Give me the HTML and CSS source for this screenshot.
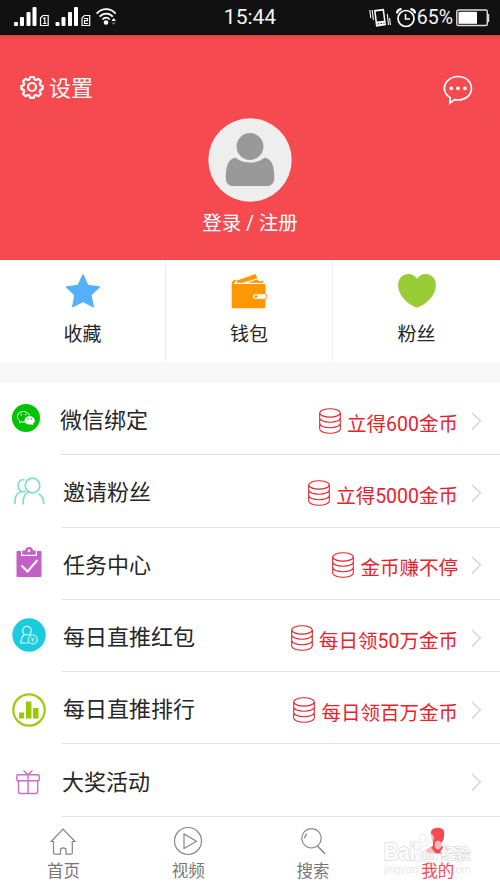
FILE: index.html
```
<!DOCTYPE html>
<html lang="zh-CN">
<head>
<meta charset="utf-8">
<title>我的</title>
<link rel="stylesheet" href="styles.css">
</head>
<body>
<svg class="defs" width="0" height="0">
  <symbol id="coins" viewBox="0 0 22 26">
    <g fill="none" stroke="currentColor" stroke-width="1.1">
      <ellipse cx="11" cy="4.9" rx="10.3" ry="4.2"/>
      <path d="M.7 4.9V21c0 2.400 4.600 4.300 10.300 4.300S21.300 23.400 21.300 21V4.900M.7 10c0 2.400 4.600 4.200 10.300 4.200s10.300-1.800 10.300-4.200M.7 15.500c0 2.400 4.600 4.200 10.300 4.200s10.300-1.800 10.300-4.200"/>
    </g>
  </symbol>
  <symbol id="chevron" viewBox="0 0 11 18">
    <path d="M1 1l8.500 8L1 17.500" fill="none" stroke="#d4d4d4" stroke-width="1.300"/>
  </symbol>
</svg>

<header class="status">
  <svg class="signals" width="106" height="20" viewBox="0 0 106 20">
    <g fill="#fff">
      <rect x="0" y="15" width="4" height="4" rx="1"/><rect x="6" y="10" width="4" height="9" rx="1"/><rect x="12.500" y="5" width="4" height="14" rx="1"/><rect x="18.500" width="4" height="19" rx="1"/>
      <rect x="41.500" y="15" width="4" height="4" rx="1"/><rect x="47.500" y="10" width="4" height="9" rx="1"/><rect x="54" y="5" width="4" height="14" rx="1"/><rect x="60" width="4" height="19" rx="1"/>
      <circle cx="92" cy="15.500" r="2.300"/><path d="M97.500 14l2.200-3 2.200 3z"/><path d="M97.500 15.500l2.200 2.500 2.200-2.500z" opacity=".4"/>
    </g>
    <g fill="none" stroke="#fff" stroke-width="1.200">
      <path d="M26.500 11l2.500-2.500h5.200v10h-7.700zM29.300 11.800l1.500-1v5.700M29 16.500h3.500"/>
      <path d="M68 11l2.500-2.500h5.200v10H68zM70 11.500h3.500v2.200H70.500v2.800h3.500"/>
      <path d="M82.700 6.600c5.200-6 13.800-6 19 0M85.600 9.700c3.800-4.200 9.400-4.200 13.200 0M88.400 12.500c2.200-2.400 5.200-2.400 7.300 0" stroke-width="1.800"/>
    </g>
  </svg>
  <span class="clock">15:44</span>
  <div class="status-right">
    <svg width="22" height="20" viewBox="0 0 22 20">
      <path d="M5 2l10-1.200 2 16.500-10 1.500z" fill="#fff"/><path d="M6.700 3.500l7-.8 1.300 10-7.100.9z" fill="#111"/><path d="M8.500 16l7-.9" stroke="#111" stroke-dasharray="1.500 1.500"/>
      <path d="M.8 2l1 8M3.200 2l1.200 10M18.300 6l1.200 11M20.600 10l.8 7" stroke="#fff" stroke-width="1.100"/>
    </svg>
    <svg class="alarm" width="20" height="20" viewBox="0 0 20 20" fill="none" stroke="#fff">
      <circle cx="10" cy="10.500" r="8" stroke-width="1.700"/><path d="M9.500 6v5h4.500" stroke-width="1.600"/><path d="M1 5.300c.3-2.500 2-4 4.500-4.200M14.500 1.100c2.500.2 4.200 1.700 4.500 4.200" stroke-width="2.300"/>
    </svg>
    <span class="percent">65%</span>
    <svg class="battery" width="34" height="18" viewBox="0 0 34 18">
      <rect x=".8" y="1" width="30.500" height="15.500" rx="1.500" fill="none" stroke="#ddd" stroke-width="1.400"/><rect x="2.500" y="2.800" width="18.500" height="12" fill="#fff"/><path d="M32.300 5v8" stroke="#ddd" stroke-width="1.800"/>
    </svg>
  </div>
</header>

<section class="profile">
  <div class="profile-bar">
    <div class="settings">
      <svg width="24" height="24" viewBox="0 0 24 24" fill="none" stroke="#fff" stroke-width="2.200">
        <circle cx="12" cy="12" r="4"/>
        <path stroke-linejoin="round" d="M10.200 2h3.600l.8 2.500 1.500.6 2.300-1.300 2.600 2.600-1.300 2.300.6 1.500 2.300.7v3.200l-2.300.8-.6 1.400 1.300 2.400-2.600 2.500-2.300-1.200-1.500.6-.8 2.200h-3.600l-.8-2.200-1.500-.6-2.300 1.200L3 18.700l1.300-2.400-.6-1.400-2.300-.8v-3.200l2.300-.7.600-1.500L3 6.400l2.600-2.600 2.300 1.300 1.500-.6z"/>
      </svg>
      <span>设置</span>
    </div>
    <svg width="30" height="30" viewBox="0 0 30 30">
      <path d="M7.300 22.700C3.500 20.500 1.400 17.300 1.400 13.500 1.400 7 7.300 1.500 15 1.500s13.400 5.300 13.400 12S22.500 25 15 25c-1.400 0-2.500 0-3.500-.4l-4.700 3.500z" fill="none" stroke="#fff" stroke-width="1.700"/>
      <g fill="#fff"><circle cx="8.300" cy="13.300" r="1.900"/><circle cx="15" cy="13.300" r="1.900"/><circle cx="21.900" cy="13.300" r="1.900"/></g>
    </svg>
  </div>
  <svg class="avatar" width="84" height="84" viewBox="0 0 84 84">
    <circle cx="42" cy="42" r="41.700" fill="#eee"/>
    <g fill="#999"><circle cx="42" cy="28.500" r="13.400"/><path d="M27.500 39.800c4 3 8 4.700 14.500 4.700s10.500-1.700 14.500-4.700c7 .7 9.800 7.700 9.800 19.700 0 5.500-2.500 8.600-7.500 8.600H25.500c-5 0-7.700-3.100-7.700-8.600 0-12 2.900-19 9.700-19.700z"/></g>
  </svg>
  <div class="login">登录 / 注册</div>
</section>

<nav class="shortcuts">
  <div class="shortcut">
    <svg width="36" height="36" viewBox="0 0 36 36"><path d="M18 2l4.800 10.500 11.500 1.500-8.500 8 2.400 11.700L18 28.300 7.800 33.700 10 22l-8.400-8 11.600-1.500z" fill="#55b0ff" stroke="#55b0ff" stroke-width="1.500" stroke-linejoin="round"/></svg>
    <span>收藏</span>
  </div>
  <div class="shortcut">
    <svg width="36" height="36" viewBox="0 0 36 36">
      <path d="M3 11h30.500q1 0 1 1v22q0 1.300-1.300 1.300H2Q.7 35.300.7 34V11q0-3.500 3-4l3-.5-3 2.500z" fill="#ff9800"/>
      <path d="M5.500 9.800L6 7.500l18.500-6.400 1.700 4.200-15 4.800zM16 9.800l11-3.500.3 1.700h5v2z" fill="#ff9800"/>
      <path d="M5 10.300h29" stroke="#fff" stroke-width=".8"/>
      <path d="M24.300 20.700h9.500q2 .5 2 2.800t-2 2.800h-9.500a2.800 2.800 0 0 1 0-5.600z" fill="#fff" stroke="#ff9800" stroke-width="1"/><circle cx="25" cy="23.500" r="1.500" fill="#ff9800"/>
    </svg>
    <span>钱包</span>
  </div>
  <div class="shortcut">
    <svg width="38" height="36" viewBox="0 0 38 36"><path d="M19 5.700C21 2.700 24 1 27.500 1 33 1 37.900 5 37.900 12c0 11-10 19.500-18.900 22.800C10 31.500.1 23 .1 12 .1 5 5 1 10.500 1 14 1 17 2.700 19 5.700z" fill="#9acc38"/></svg>
    <span>粉丝</span>
  </div>
</nav>

<main class="menu">
  <div class="row">
    <div class="icon wechat"><svg width="28" height="28" viewBox="0 0 28 28">
      <circle cx="14" cy="14" r="14" fill="#00c400"/>
      <path d="M13 18c-1.500.2-2.300 0-3.200-.2l-2.300 1 .4-2C6.200 15.700 5.400 14.300 5.400 12.800c0-3 2.700-5.300 6.100-5.300 3 0 5.300 1.700 6 4.200" fill="none" stroke="#fff" stroke-width="1"/>
      <path d="M17.700 12.300c2.900 0 5.100 1.900 5.100 4.200 0 1.400-.7 2.500-1.800 3.200l.4 1.500-1.800-.8c-3.700.8-7-1.200-7-3.900 0-2.300 2.200-4.200 5.100-4.200z" fill="#fff"/>
      <g fill="#fff"><circle cx="9.300" cy="10.600" r=".8"/><circle cx="13.700" cy="10.600" r=".8"/></g><g fill="#00c400"><circle cx="16" cy="15" r=".7"/><circle cx="19.400" cy="15" r=".7"/></g>
    </svg></div>
    <div class="content first"><span class="title">微信绑定</span><span class="reward"><svg class="coins"><use href="#coins"/></svg><span>立得600金币</span></span><svg class="chevron"><use href="#chevron"/></svg></div>
  </div>
  <div class="row">
    <div class="icon fans"><svg width="32" height="28" viewBox="0 0 32 28" fill="none" stroke="#83dfc0" stroke-width="1.700">
      <circle cx="18.500" cy="8.500" r="7.300"/><path d="M9.200 27.500v-3c0-5.500 3-9.500 7-9.500M24.500 16.700c3.500 2 5.200 5 5.200 9v1.500M10.500 3c-3.700-1-6.200 1.300-6.200 5.800 0 2.800 1.200 5 3.200 5.800h4.200M8.300 14.500C3.500 15.500 1 18.500 1 24v3"/>
    </svg></div>
    <div class="content"><span class="title">邀请粉丝</span><span class="reward"><svg class="coins"><use href="#coins"/></svg><span>立得5000金币</span></span><svg class="chevron"><use href="#chevron"/></svg></div>
  </div>
  <div class="row">
    <div class="icon task"><svg width="26" height="32" viewBox="0 0 26 32">
      <path d="M1.500 5H5v5h16V5h3.500q1 0 1 1v24q0 1-1 1h-23q-1 0-1-1V6q0-1 1-1z" fill="#c55fc8"/><path d="M6.300 4.500H9c.5-2 1.500-3.500 4-3.500s3.500 1.500 4 3.500h2.700v4.200H6.300z" fill="#c55fc8"/><circle cx="13" cy="4.800" r="1.500" fill="#fff"/><path d="M5.500 19.500l6 6L21.500 14" fill="none" stroke="#fff" stroke-width="2"/>
    </svg></div>
    <div class="content"><span class="title">任务中心</span><span class="reward"><svg class="coins"><use href="#coins"/></svg><span>金币赚不停</span></span><svg class="chevron"><use href="#chevron"/></svg></div>
  </div>
  <div class="row">
    <div class="icon packet"><svg width="34" height="34" viewBox="0 0 34 34">
      <circle cx="17" cy="17" r="16.700" fill="#1bcddc"/>
      <g fill="none" stroke="#d7f7fa" stroke-width="1.200"><circle cx="15" cy="12.700" r="4.300"/><path d="M12.500 16.500c-2.300 1.500-3.300 4.300-3.800 8.500h8M17.500 16.300l1.500 1.200"/><circle cx="20.800" cy="21.500" r="4.500"/><path d="M19 19.300l1.800 2 1.800-2M20.800 21.300v3M19.200 22h3.200" stroke-width=".8"/></g>
    </svg></div>
    <div class="content"><span class="title">每日直推红包</span><span class="reward"><svg class="coins"><use href="#coins"/></svg><span>每日领50万金币</span></span><svg class="chevron"><use href="#chevron"/></svg></div>
  </div>
  <div class="row">
    <div class="icon ranking"><svg width="34" height="34" viewBox="0 0 34 34">
      <circle cx="17" cy="17" r="15.700" fill="none" stroke="#9bcd0b" stroke-width="2.200"/><path d="M7 19.500h5v6H7zM14 8.500h5.500v17H14zM21 15h5.500v10.500H21z" fill="#97cb00"/>
    </svg></div>
    <div class="content"><span class="title">每日直推排行</span><span class="reward"><svg class="coins"><use href="#coins"/></svg><span>每日领百万金币</span></span><svg class="chevron"><use href="#chevron"/></svg></div>
  </div>
  <div class="row">
    <div class="icon gift"><svg width="24" height="26" viewBox="0 0 24 26" fill="none" stroke="#cb6bd0" stroke-width="1.400">
      <rect x=".8" y="5.800" width="22.400" height="6" rx="1.200"/><path d="M2.500 12v10.500q0 2 2 2h15.200q2 0 2-2V12M12 6v18.500M7.500 1.500L12 5.700l4.500-4.200"/>
    </svg></div>
    <div class="content gift-row"><span class="title">大奖活动</span><svg class="chevron"><use href="#chevron"/></svg></div>
  </div>
</main>

<footer class="tabs">
  <div class="tab"><svg width="28" height="30" viewBox="0 0 28 30" fill="none" stroke="#858585" stroke-width="1.200"><path d="M2.200 15.500L14 3l12 12.500h-2.700V27q0 1.200-1.300 1.200h-5V24q0-2.200-2.700-2.200T11.500 24v4.200H6Q4.500 28.200 4.500 27V15.500z"/></svg><span>首页</span></div>
  <div class="tab"><svg width="30" height="30" viewBox="0 0 30 30" fill="none" stroke="#858585" stroke-width="1.200"><circle cx="15" cy="15" r="13.500"/><path d="M11 8v14.500L23.500 15.200z"/></svg><span>视频</span></div>
  <div class="tab"><svg width="28" height="30" viewBox="0 0 28 30" fill="none" stroke="#858585" stroke-width="1.200"><circle cx="12.500" cy="12.300" r="9.700"/><path d="M18.500 20l7.500 7.700" stroke-width="1.500"/><path d="M5.800 12.500c0-2 .7-3.500 2-4.700"/></svg><span>搜索</span></div>
  <div class="tab active"><svg width="28" height="30" viewBox="0 0 28 30"><path d="M7.700 4c3-3 8-3 11.500-.5 1.500 2 1.200 5 .6 8.500-.5 2-1.300 3.500-2.500 4.500v3.500c2.500 1.700 7.300 2.700 8 7.500H.7c.7-4.800 5.300-5.800 8.300-7.500v-3.500C7.500 14.500 7.500 12 7.200 9.500c-.3-2-.5-4 .5-5.500z" fill="#f54b50"/></svg><span>我的</span></div>
  <svg class="watermark" width="94" height="48" viewBox="0 0 94 48">
    <g fill="#fff" fill-opacity=".6" stroke="#dcdcdc" stroke-opacity=".8" stroke-width=".8">
      <path d="M35 21c3-3 3-8 8-8s6 5 9 8c5 4 2 10-3 9-4-1-8-1-12 0-5 1-7-5-2-9z"/>
      <ellipse cx="34" cy="14" rx="2.900" ry="4"/><ellipse cx="39.500" cy="6.500" rx="3" ry="4.200"/><ellipse cx="47.500" cy="6.500" rx="3" ry="4.200"/><ellipse cx="55" cy="13" rx="2.900" ry="4"/>
    </g>
    <g class="wm-text">
      <text class="wm-name" x="1" y="28" textLength="31" lengthAdjust="spacingAndGlyphs">Bai</text>
      <text class="wm-du" x="37" y="27">du</text>
      <text class="wm-cn" x="58" y="27">经验</text>
    </g>
    <text class="wm-url" x="1" y="41" textLength="87">jingyan.baidu.com</text>
  </svg>
</footer>
</body>
</html>
```
FILE: styles.css
```
* { box-sizing: border-box; }
body {
  margin: 0;
  width: 500px;
  height: 889px;
  overflow: hidden;
  background: #fff;
  color: #262626;
  font-family: Roboto, "Noto Sans CJK SC", sans-serif;
}
svg { display: block; flex: none; }
.defs { height: 0; }

.status {
  height: 35px;
  padding: 0 10px 0 14px;
  display: grid;
  grid-template-columns: 1fr auto 1fr;
  align-items: center;
  background: #111;
  color: #f5f5f5;
}
.signals { margin-bottom: 1px; }
.clock { font-size: 21px; line-height: 35px; margin-right: 4px; }
.status-right { display: flex; align-items: center; justify-content: flex-end; }
.alarm { margin-left: 5px; }
.percent { margin-left: 1px; font-size: 19.500px; line-height: 35px; }
.battery { margin-left: 3px; }

.profile {
  height: 225px;
  background: linear-gradient(#d94247, #f54b50 4px);
  color: #fff;
  display: flex;
  flex-direction: column;
  align-items: center;
}
.profile-bar {
  width: 100%;
  height: 83px;
  padding: 40px 27px 0 20px;
  display: flex;
  justify-content: space-between;
  align-items: flex-start;
}
.settings svg { margin-bottom: 2px; }
.settings span { padding-top: 1px; }
.settings { display: flex; align-items: center; gap: 5px; font-size: 22px; line-height: 24px; }
.avatar { margin-bottom: 8px; }
.login { font-size: 19.500px; line-height: 28px; }

.shortcuts {
  height: 102px;
  display: grid;
  grid-template-columns: 165px 167px 168px;
}
.shortcut {
  padding-top: 13px;
  display: flex;
  flex-direction: column;
  align-items: center;
  gap: 12px;
  font-size: 19px;
  line-height: 28px;
}
.shortcut + .shortcut { border-left: 1px solid #ededf2; }

.menu { border-top: 21px solid #f8f8f8; }
.row { display: flex; height: 72.300px; }
.icon { width: 61px; padding-left: 12px; display: flex; align-items: center; flex: none; }
.wechat { padding-bottom: 3px; }
.fans { padding-left: 14px; padding-bottom: 1px; }
.task { padding-left: 16px; padding-bottom: 3px; }
.packet { padding-bottom: 2px; }
.ranking { padding-top: 3px; }
.gift { padding-left: 16px; padding-top: 2px; }
.content {
  flex: 1;
  padding: 4px 18px 0 2px;
  display: flex;
  align-items: center;
  border-bottom: 1px solid #e2e2e2;
}
.content.first { margin-left: -1px; padding-left: 0; }
.content.gift-row { padding-left: 1px; }
.title { font-size: 22px; line-height: 32px; padding-top: 1px; }
.reward {
  margin-left: auto;
  display: flex;
  align-items: center;
  gap: 6px;
  color: #e9232b;
  font-size: 19.500px;
  line-height: 28px;
}
.reward span { padding-top: 8px; }
.coins { width: 22px; height: 26px; }
.chevron { width: 11px; height: 18px; margin-left: 13px; }
.gift-row .chevron { margin-left: auto; }

.tabs {
  position: relative;
  height: 72px;
  padding: 0 0 0 1px;
  display: grid;
  grid-template-columns: repeat(4, 1fr);
  background: #fff;
}
.tab {
  padding-top: 9px;
  display: flex;
  flex-direction: column;
  align-items: center;
  gap: 4px;
  font-size: 16.500px;
  line-height: 24px;
  color: #777;
}
.tab span { position: relative; z-index: 1; }
.tab.active { color: #f54b50; }
.watermark { position: absolute; left: 383px; top: 15px; overflow: visible; }
.wm-text {
  fill: #fff;
  stroke: #dcdcdc;
  stroke-width: 1.600px;
  paint-order: stroke;
}
.wm-name { font: bold 23px "Liberation Sans", sans-serif; }
.wm-du { font: bold 11px "Liberation Sans", sans-serif; }
.wm-cn { font: 500 14.500px "Noto Sans CJK SC", sans-serif; }
.wm-url { font: 11px "Liberation Sans", sans-serif; fill: #dedede; fill-opacity: .75; }
```
